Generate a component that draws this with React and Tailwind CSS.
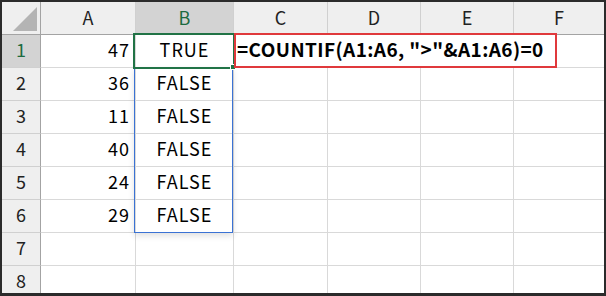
import React from "react";

const cols = ["A", "B", "C", "D", "E", "F"];
const values = [47, 36, 11, 40, 24, 29];
const font = { fontFamily: '"Noto Sans CJK JP", "Noto Sans", sans-serif' };

function ColHeader({ label, selected, last }) {
  return (
    <div
      className={`flex items-center justify-center border-b border-b-[#a3a3a3] ${
        last ? "" : "border-r border-r-[#d0d0d0]"
      } ${selected ? "bg-[#d3d3d3] text-[#1d6b40]" : "bg-[#efefef] text-[#222]"} text-[18px]`}
    >
      <span className="-translate-y-[1px]">{label}</span>
    </div>
  );
}

function RowHeader({ n, selected }) {
  return (
    <div
      className={`flex items-center justify-center border-r border-r-[#a3a3a3] border-b border-b-[#d0d0d0] text-[18px] ${
        selected ? "bg-[#d3d3d3] text-[#1d6b40]" : "bg-[#efefef] text-[#222]"
      }`}
    >
      <span className="-translate-y-[2px]">{n}</span>
    </div>
  );
}

function Cell({ children, align = "center", last }) {
  const justify =
    align === "right" ? "justify-end pr-[5px]" : align === "left" ? "justify-start pl-[3px]" : "justify-center";
  return (
    <div
      className={`flex items-center ${justify} border-b border-b-[#d9d9d9] ${
        last ? "" : "border-r border-r-[#d9d9d9]"
      } text-[18px] text-black tracking-[1px]`}
    >
      <span className="-translate-y-[2px]">{children}</span>
    </div>
  );
}

export default function App() {
  const rows = [];
  for (let r = 1; r <= 8; r++) {
    const v = values[r - 1];
    rows.push(<RowHeader key={`h${r}`} n={r} selected={r === 1} />);
    rows.push(
      <Cell key={`a${r}`} align="right">
        {v ?? ""}
      </Cell>
    );
    rows.push(<Cell key={`b${r}`}>{v === undefined ? "" : r === 1 ? "TRUE" : "FALSE"}</Cell>);
    if (r === 1) {
      rows.push(
        <div
          key="c1"
          className="col-span-4 flex items-center justify-start pl-[3px] border-b border-b-[#d9d9d9] whitespace-nowrap text-[19px] font-bold text-black tracking-[0.4px]"
        >
          <span className="-translate-y-[2px]">=COUNTIF(A1:A6, "&gt;"&amp;A1:A6)=0</span>
        </div>
      );
    } else {
      rows.push(<Cell key={`c${r}`} />);
      rows.push(<Cell key={`d${r}`} />);
      rows.push(<Cell key={`e${r}`} />);
      rows.push(<Cell key={`f${r}`} last />);
    }
  }

  return (
    <div className="w-[606px] h-[296px] bg-[#2b2b2b] pt-[2px] pl-[2px] pr-[2px] pb-[3px]" style={font}>
      <div className="relative w-full h-full bg-white overflow-hidden">
        <div className="grid grid-cols-[39px_95px_98px_94px_93px_93px_1fr] grid-rows-[33px_repeat(8,33px)]">
          {/* corner cell with the select-all triangle */}
          <div className="relative bg-[#efefef] border-r border-r-[#a3a3a3] border-b border-b-[#a3a3a3]">
            <svg className="absolute left-0 top-0" width="38" height="32" viewBox="0 0 38 32">
              <polygon points="11,29 35,29 35,5" fill="#b4b4b4" />
            </svg>
          </div>
          {cols.map((c, i) => (
            <ColHeader key={c} label={c} selected={c === "B"} last={i === cols.length - 1} />
          ))}
          {rows}
        </div>

        {/* range outline B2:B6 */}
        <div className="absolute left-[132px] top-[65px] w-[99px] h-[166px] border border-[#3a72d4] shadow-[0_3px_6px_rgba(0,0,0,0.12)]" />
        {/* active cell B1 */}
        <div className="absolute left-[131px] top-[31px] w-[102px] h-[36px] border-2 border-[#217346]" />
        <div className="absolute left-[228px] top-[62px] w-[6px] h-[6px] bg-[#217346] border border-white" />
        {/* formula highlight */}
        <div className="absolute left-[232px] top-[31px] w-[323px] h-[35px] border-2 border-[#e0393c]" />
      </div>
    </div>
  );
}
